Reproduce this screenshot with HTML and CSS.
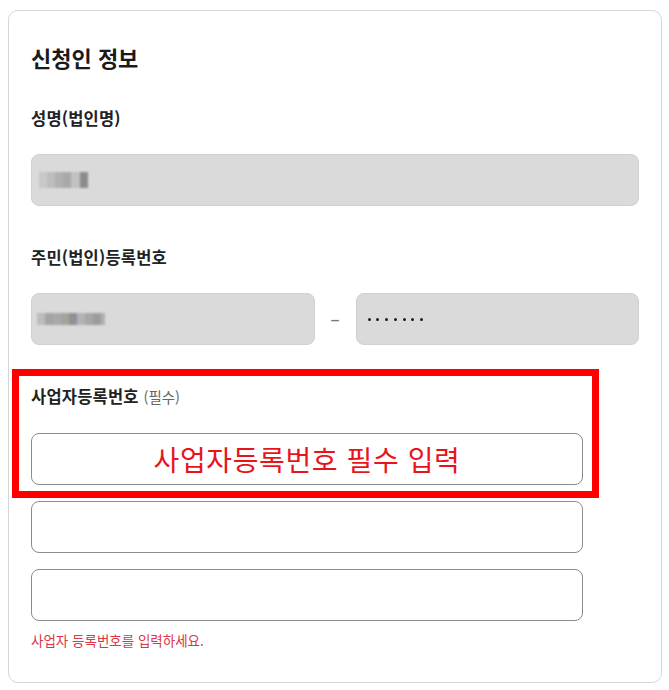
FILE: index.html
```html
<!DOCTYPE html>
<html lang="ko">
<head>
<meta charset="utf-8">
<title>신청인 정보</title>
<link rel="stylesheet" href="styles.css">
</head>
<body>
<section class="card">
  <h2 class="card-title">신청인 정보</h2>

  <div class="field">
    <label class="field-label">성명(법인명)</label>
    <div class="input input-readonly">
      <span class="blur blur-name"><i></i><i></i><i></i><i></i><i></i><i></i></span>
    </div>
  </div>

  <div class="field">
    <label class="field-label">주민(법인)등록번호</label>
    <div class="split-row">
      <div class="input input-readonly">
        <span class="blur blur-id"><i></i><i></i><i></i><i></i><i></i><i></i><i></i><i></i><i></i></span>
      </div>
      <span class="split-dash">–</span>
      <div class="input input-readonly">
        <span class="dots"><i></i><i></i><i></i><i></i><i></i><i></i><i></i></span>
      </div>
    </div>
  </div>

  <div class="field field-biz">
    <div class="highlight-group">
      <label class="field-label">사업자등록번호 <span class="required">(필수)</span></label>
      <div class="input input-edit input-notice">사업자등록번호 필수 입력</div>
      <div class="highlight-box"></div>
    </div>
    <div class="input input-edit"></div>
    <div class="input input-edit"></div>
    <p class="error-text">사업자 등록번호를 입력하세요.</p>
  </div>
</section>
</body>
</html>
```

FILE: styles.css
```css
* { box-sizing: border-box; }

html, body {
  margin: 0;
  padding: 0;
  background: #ffffff;
}

body {
  padding: 10px 8px 7px 8px;
  font-family: "Noto Sans CJK KR", "Noto Sans", sans-serif;
  color: #222222;
}

.card {
  width: 654px;
  height: 673px;
  border: 1px solid #d7d7d7;
  border-radius: 10px;
  padding: 32px 22px 32px 22px;
  display: flex;
  flex-direction: column;
  box-shadow: 0 0 1px rgba(0,0,0,0.06);
}

.card-title {
  margin: 0;
  font-size: 22px;
  font-weight: 700;
  line-height: 28px;
  color: #1a1a1a;
}

.field {
  display: flex;
  flex-direction: column;
}

.field + .field { margin-top: 40px; }
.card-title + .field { margin-top: 36px; }

.field-label {
  display: block;
  font-size: 16.5px;
  font-weight: 700;
  line-height: 22px;
  letter-spacing: 0.2px;
  color: #222222;
  margin-bottom: 25px;
}

.required {
  font-size: 14.5px;
  font-weight: 400;
  letter-spacing: 0;
  color: #666666;
}

.input {
  height: 52px;
  border-radius: 8px;
  display: flex;
  align-items: center;
  padding: 0 8px;
}

.input-readonly {
  background: #dadada;
  border: 1px solid #d0d0d0;
}

.input-edit {
  background: #ffffff;
  border: 1px solid #8c8c8c;
  width: 552px;
}

.field-biz .input-edit + .input-edit { margin-top: 16px; }

.highlight-group {
  position: relative;
  display: flex;
  flex-direction: column;
  margin-bottom: 16px;
}

.highlight-box {
  position: absolute;
  top: -16px;
  left: -19px;
  width: 587px;
  bottom: -13px;
  border: 7px solid #ff0000;
  pointer-events: none;
}

.input-notice {
  justify-content: center;
  color: #e8141c;
  font-size: 28px;
  font-weight: 400;
  letter-spacing: 0.6px;
  line-height: 1;
  padding-bottom: 1px;
  white-space: pre;
}

.split-row {
  display: flex;
  align-items: center;
}

.split-row .input-readonly {
  flex: 1;
}

.split-dash {
  width: 41px;
  text-align: center;
  color: #777777;
  font-family: "DejaVu Sans", sans-serif;
  font-size: 19px;
  line-height: 1;
}

.blur {
  display: flex;
  filter: blur(1.2px);
}

.blur i {
  display: block;
  width: 8px;
  height: 100%;
}

.blur-name { height: 16px; margin-left: -1px; }
.blur-name i:nth-child(1) { background: #c8c8c8; }
.blur-name i:nth-child(2) { background: #bdbdbd; }
.blur-name i:nth-child(3) { background: #b0b0b0; }
.blur-name i:nth-child(4) { background: #a8a8a8; }
.blur-name i:nth-child(5) { background: #c2c2c2; width: 9px; }
.blur-name i:nth-child(6) { background: #8c8c8c; width: 8px; }

.blur-id { height: 12px; margin-left: -3px; }
.blur-id i:nth-child(1) { background: #bcbcbc; }
.blur-id i:nth-child(2) { background: #a4a4a4; }
.blur-id i:nth-child(3) { background: #a9a9a9; }
.blur-id i:nth-child(4) { background: #a6a39a; }
.blur-id i:nth-child(5) { background: #8f9098; }
.blur-id i:nth-child(6) { background: #b3b3b3; }
.blur-id i:nth-child(7) { background: #a7a7a7; }
.blur-id i:nth-child(8) { background: #9c9c9c; }
.blur-id i:nth-child(9) { background: #b0b0b0; width: 4px; }

.dots {
  display: flex;
  gap: 5.8px;
  margin-left: 3px;
}

.dots i {
  display: block;
  width: 3px;
  height: 3px;
  border-radius: 50%;
  background: #1e1e1e;
}

.error-text {
  margin: 10px 0 0 0;
  font-size: 13.5px;
  line-height: 18px;
  color: #dc3545;
}
```
